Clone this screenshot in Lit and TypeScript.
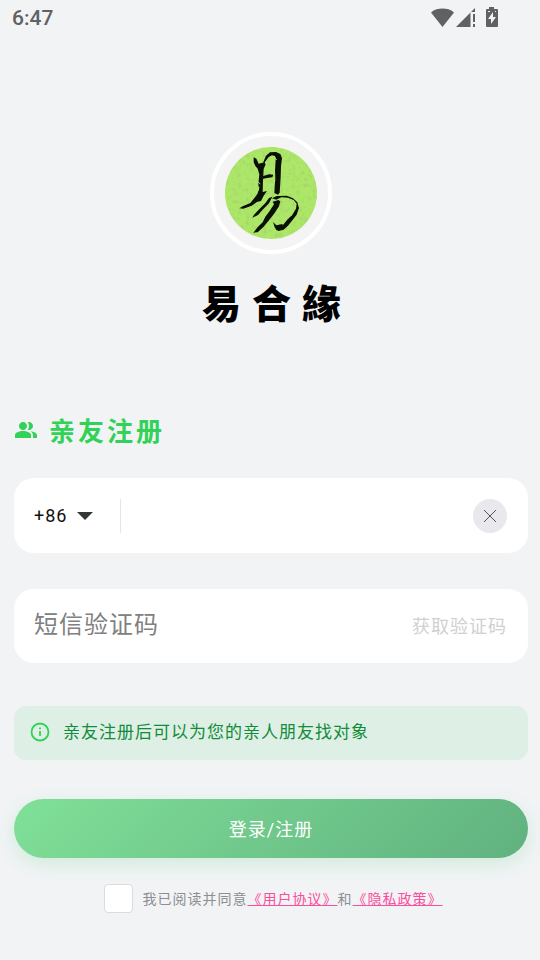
import { LitElement, html, css } from "lit";
import { customElement, state } from "lit/decorators.js";

@customElement("status-bar")
class StatusBar extends LitElement {
  static styles = css`
    :host {
      display: flex;
      justify-content: space-between;
      align-items: center;
      height: 36px;
      padding: 0 41px 0 12px;
      color: #616161;
      font: 500 21px/38px Roboto, sans-serif;
      letter-spacing: 0;
    }
    .icons {
      display: block;
    }
  `;

  render() {
    return html`
      <span>6:47</span>
      <svg class="icons" width="68" height="24" viewBox="0 0 68 24" fill="#616161" aria-hidden="true">
        <path d="M0 6.500C3.500 3.400 7.300 2.500 11.500 2.500s8 .9 11.500 4L11.500 21z" />
        <path d="M44 2v4h-4.500v15H25z" />
        <path d="M42 8h2v8h-2zM42 18h2v3h-2z" />
        <path
          fill-rule="evenodd"
          d="M58 1h5v2h3q1 0 1 1v16q0 1-1 1H56q-1 0-1-1V4q0-1 1-1h2zM62 6l-5 7h3v5l5-7h-3zM57 5v1h2v-1zM64 5v1h1v-1z"
        />
      </svg>
    `;
  }
}

@customElement("brand-header")
class BrandHeader extends LitElement {
  static styles = css`
    :host {
      display: flex;
      flex-direction: column;
      align-items: center;
      gap: 20px;
      padding: 96px 12px 0 14px;
    }
    .ring {
      display: flex;
      align-items: center;
      justify-content: center;
      box-sizing: border-box;
      width: 122px;
      height: 122px;
      border: 4px solid #fff;
      border-radius: 50%;
      background: #f4f4f4;
    }
    .seal {
      border-radius: 50%;
    }
    .name {
      margin: 0;
      padding-left: 12px;
      color: #000;
      font: 900 39px/54px "Noto Sans CJK TC", sans-serif;
      letter-spacing: 11px;
    }
  `;

  render() {
    return html`
      <div class="ring">
        <svg class="seal" width="92" height="92" viewBox="75 66 276 276" aria-hidden="true">
          <defs>
            <filter id="paper" x="0" y="0" width="1" height="1">
              <feTurbulence type="fractalNoise" baseFrequency="0.08" numOctaves="3" seed="4" />
              <feColorMatrix
                values="0 0 0 0 0.36  0 0 0 0 0.55  0 0 0 0 0.16  1.5 0 0 0 -0.72"
              />
            </filter>
          </defs>
          <rect x="75" y="66" width="276" height="276" fill="#ace768" />
          <rect x="75" y="66" width="276" height="276" filter="url(#paper)" />
          <g fill="#0b1005">
            <path d="M161 97l8 4 7 15 17-4 4 6-6 14-2 35-1 34 13-3-10 14-8 16-12 3-16 11-25 9-12-1 10-6 23-10 14-17 7-10 5-14-2-17 3-28-5-17-7-8-5-11z" />
            <path d="M190 111l8-19 12-10 18-1 13 6 5 13-3 24-1 33-3 46-5 6-11-5 1-20 2-22-1-25 2-33-2-11-9-2-10 5-9 12-6 10z" />
            <path d="M187 154l20-6 13 1-3 8-16 2-14 3z" />
            <path d="M217 215l-10 20-17 17-16 18-17 8 5-9 17-18 18-18 10-14z" />
            <path d="M216 220l14-7 30-1 19 8 13 12 5 17-7 20-14 18-12 15-13 12-15 4-9-5 10-13 10 2 14-17 16-16 11-18 2-15-9-11-17-7-20-1-15 7z" />
            <path d="M218 230l17-5 6 4-4 15-13 20-17 22-16 19-18 17-13 1 14-18 14-13 8-17 13-17 13-20z" />
            <path d="M219 291l10 10 18-4 3 9-9 9-11 1-6-9z" />
          </g>
          <g stroke="#ace768" stroke-width="3" stroke-linecap="round">
            <path d="M172 170l8 6M224 96l5 8M280 259l-7 13M188 278l8-10M174 196l3-9" />
          </g>
        </svg>
      </div>
      <h1 class="name">易合緣</h1>
    `;
  }
}

@customElement("app-root")
class AppRoot extends LitElement {
  @state() private phone = "";

  static styles = css`
    :host {
      display: block;
      box-sizing: border-box;
      min-height: 100vh;
      background: #f1f3f5;
      font-family: Roboto, "Noto Sans CJK SC", sans-serif;
      letter-spacing: 1px;
    }
    button,
    input,
    select {
      margin: 0;
      padding: 0;
      border: 0;
      background: none;
      color: inherit;
      font: inherit;
      letter-spacing: inherit;
      outline: none;
    }
    button {
      cursor: pointer;
    }
    .form {
      display: flex;
      flex-direction: column;
      padding: 84px 12px 40px 14px;
    }
    .title {
      display: flex;
      align-items: center;
      gap: 11px;
      margin: 0 0 26px;
      color: #32d157;
      font-size: 26px;
      font-weight: 700;
      line-height: 40px;
      letter-spacing: 3px;
    }
    .people {
      margin-bottom: 4px;
    }
    .card {
      display: flex;
      align-items: center;
      box-sizing: border-box;
      height: 75px;
      margin-bottom: 36px;
      padding: 0 21px 0 20px;
      border-radius: 20px;
      background: #fff;
    }
    .sms {
      height: 74px;
      padding-bottom: 2px;
    }
    .region {
      display: grid;
      align-items: center;
      width: 86px;
      height: 34px;
      border-right: 1px solid #e5e5e5;
      color: #111;
      font-size: 18px;
    }
    .region > * {
      grid-area: 1 / 1;
    }
    .code {
      width: 60px;
      appearance: none;
    }
    .arrow {
      margin-left: 43px;
      pointer-events: none;
    }
    .field {
      flex: 1;
      min-width: 0;
      height: 40px;
      font-size: 24px;
      line-height: 40px;
    }
    .phone {
      padding: 0 16px;
    }
    .field::placeholder {
      color: #808080;
      opacity: 1;
    }
    .clear {
      display: flex;
      align-items: center;
      justify-content: center;
      width: 34px;
      height: 34px;
      border-radius: 50%;
      background: #e8e8ed;
    }
    .send {
      color: #d0d0d3;
      font-size: 18px;
    }
    .notice {
      display: flex;
      align-items: center;
      gap: 13px;
      margin: 7px 0 39px;
      padding: 12px 16px 14px;
      border-radius: 12px;
      background: #deefe5;
      color: #108c3a;
      font-size: 17px;
      line-height: 28px;
    }
    .submit {
      height: 59px;
      padding-bottom: 2px;
      border-radius: 30px;
      background: linear-gradient(135deg, #80e098, #60b17f);
      box-shadow: 0 6px 18px rgba(80, 210, 120, 0.2);
      color: #fff;
      font-size: 18px;
    }
    .terms {
      display: flex;
      align-items: center;
      justify-content: center;
      gap: 10px;
      margin-top: 26px;
      padding-left: 4px;
      color: #8e8e93;
      font-size: 14px;
      line-height: 28px;
    }
    .agree {
      box-sizing: border-box;
      width: 29px;
      height: 29px;
      border: 1px solid #dcdcde;
      border-radius: 4px;
      background: #fff;
      appearance: none;
    }
    .agree:checked {
      background: #32d157;
    }
    .link {
      color: #fb4d9d;
      text-decoration: underline;
    }
  `;

  render() {
    return html`
      <status-bar></status-bar>
      <brand-header></brand-header>
      <form class="form" @submit=${(e: Event) => e.preventDefault()}>
        <h2 class="title">
          <svg
            class="people"
            width="24"
            height="24"
            viewBox="0 0 24 24"
            fill="currentColor"
            aria-hidden="true"
          >
            <path
              d="M16.670 13.130C18.040 14.060 19 15.320 19 17v3h4v-3c0-2.180-3.570-3.470-6.330-3.870zM15 12c2.210 0 4-1.790 4-4s-1.790-4-4-4c-.47 0-.91.1-1.330.24C14.500 5.270 15 6.580 15 8s-.5 2.730-1.330 3.760c.42.14.86.24 1.330.24zM9 12c2.210 0 4-1.790 4-4s-1.790-4-4-4-4 1.790-4 4 1.790 4 4 4zM9 13c-2.670 0-8 1.340-8 4v3h16v-3c0-2.660-5.330-4-8-4z"
            />
          </svg>
          亲友注册
        </h2>

        <div class="card">
          <div class="region">
            <select class="code" aria-label="国家区号">
              <option>+86</option>
            </select>
            <svg class="arrow" width="16" height="8" viewBox="0 0 16 8" aria-hidden="true">
              <path d="M0 0h16L8 8z" fill="#333736" />
            </svg>
          </div>
          <input
            class="field phone"
            type="tel"
            aria-label="手机号"
            .value=${this.phone}
            @input=${(e: Event) => (this.phone = (e.target as HTMLInputElement).value)}
          />
          <button class="clear" type="button" aria-label="清除" @click=${() => (this.phone = "")}>
            <svg width="12" height="12" viewBox="0 0 12 12" aria-hidden="true">
              <path d="M0 0l12 12M12 0L0 12" stroke="#555" fill="none" />
            </svg>
          </button>
        </div>

        <div class="card sms">
          <input class="field" type="text" aria-label="短信验证码" placeholder="短信验证码" />
          <button class="send" type="button">获取验证码</button>
        </div>

        <div class="notice">
          <svg width="20" height="20" viewBox="0 0 20 20" fill="none" stroke="#32d157" aria-hidden="true">
            <circle cx="10" cy="10" r="8.500" stroke-width="1.800" />
            <path d="M10 9v5M10 5.500v1.800" stroke-width="1.800" />
          </svg>
          <span>亲友注册后可以为您的亲人朋友找对象</span>
        </div>

        <button class="submit" type="submit">登录/注册</button>

        <div class="terms">
          <input class="agree" id="agree" type="checkbox" />
          <span
            ><label for="agree">我已阅读并同意</label><a class="link" href="#user">《用户协议》</a
            >和<a class="link" href="#privacy">《隐私政策》</a></span
          >
        </div>
      </form>
    `;
  }
}
